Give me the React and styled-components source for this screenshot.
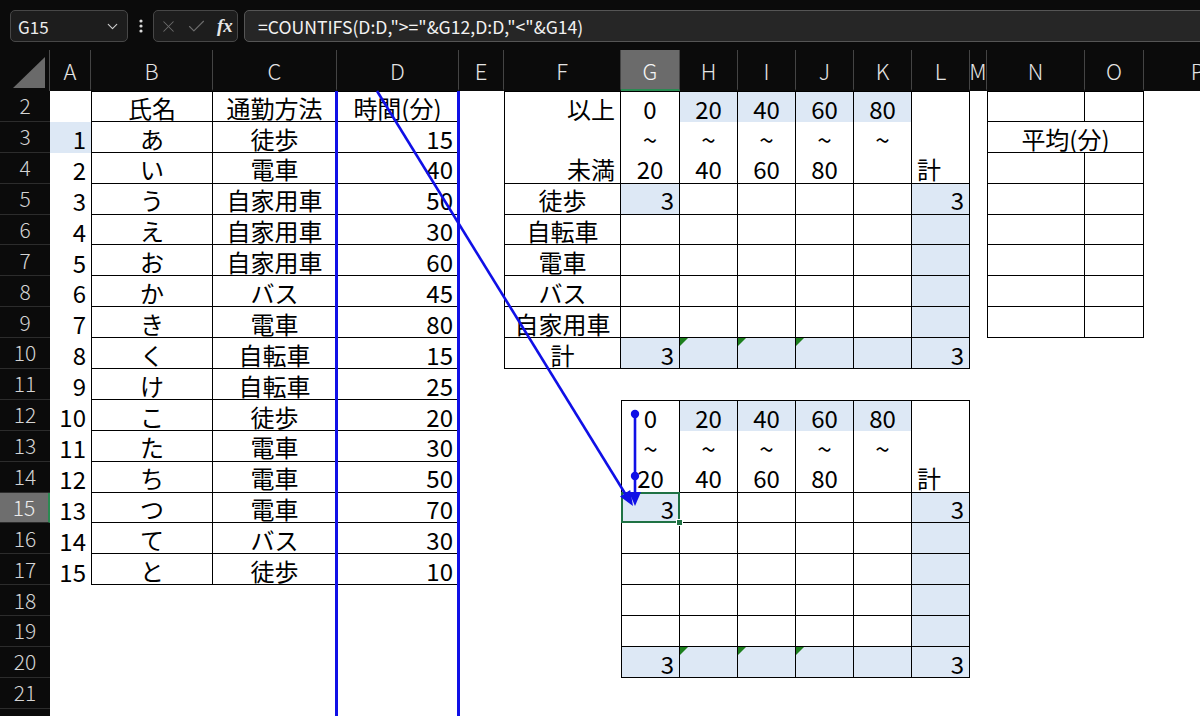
import React from 'react'
import styled, { createGlobalStyle } from 'styled-components'
import { X, Check, ChevronDown } from 'lucide-react'

const FONT = `"Noto Sans CJK JP", "Noto Sans", sans-serif`
const BLUE = '#dde8f5'
const INK = '#1010e6'
const LINE = '1px solid #000'

const COLS = [
  ['A', 41], ['B', 122], ['C', 124], ['D', 122], ['E', 45], ['F', 117],
  ['G', 59], ['H', 58], ['I', 58], ['J', 58], ['K', 58], ['L', 58],
  ['M', 17], ['N', 98], ['O', 59], ['P', 108],
]
const ROWS = Array.from({ length: 21 }, (_, i) => i + 2)

// ---- sheet contents ----
const sheet = {}
const set = (ref, v) => { sheet[ref] = { ...sheet[ref], ...v } }
const colIdx = k => COLS.findIndex(c => c[0] === k)
const range = (a, b) => COLS.slice(colIdx(a), colIdx(b) + 1).map(c => c[0])

const people = [
  ['あ', '徒歩', 15], ['い', '電車', 40], ['う', '自家用車', 50], ['え', '自家用車', 30],
  ['お', '自家用車', 60], ['か', 'バス', 45], ['き', '電車', 80], ['く', '自転車', 15],
  ['け', '自転車', 25], ['こ', '徒歩', 20], ['た', '電車', 30], ['ち', '電車', 50],
  ['つ', '電車', 70], ['て', 'バス', 30], ['と', '徒歩', 10],
]

range('B', 'D').forEach(c => {
  for (let r = 2; r <= 17; r++) set(c + r, { t: r === 2, l: c === 'B', r: true, b: true })
})
set('B2', { text: '氏名', align: 'center' })
set('C2', { text: '通勤方法', align: 'center' })
set('D2', { text: '時間(分)', align: 'center' })
people.forEach(([name, mode, min], i) => {
  const r = i + 3
  set('A' + r, { text: i + 1, align: 'flex-end' })
  set('B' + r, { text: name, align: 'center' })
  set('C' + r, { text: mode, align: 'center' })
  set('D' + r, { text: min, align: 'flex-end' })
})
set('A3', { bg: BLUE })

const bands = [['G', '0', '20'], ['H', '20', '40'], ['I', '40', '60'], ['J', '60', '80'], ['K', '80', '']]
const modes = ['徒歩', '自転車', '電車', 'バス', '自家用車', '計']

const tally = (top, withLabels) => {
  const first = withLabels ? 'F' : 'G'
  range(first, 'L').forEach(c => {
    for (let r = top; r <= top + 8; r++) {
      const head = r < top + 3
      set(c + r, { t: r === top, l: c === first, r: true, b: !head || r === top + 2 })
    }
  })
  bands.forEach(([c, from, to], i) => {
    set(c + top, { text: from, align: 'center', bg: i > 0 ? BLUE : undefined })
    set(c + (top + 1), { text: '~', align: 'center', tilde: true })
    set(c + (top + 2), { text: to, align: 'center' })
  })
  set('L' + (top + 2), { text: '計', align: 'flex-start' })
  for (let r = top + 3; r <= top + 8; r++) set('L' + r, { bg: BLUE })
  set('G' + (top + 3), { text: 3, align: 'flex-end', bg: BLUE })
  set('L' + (top + 3), { text: 3, align: 'flex-end' })
  const sum = top + 8
  set('G' + sum, { text: 3, align: 'flex-end', bg: BLUE })
  ;['H', 'I', 'J'].forEach(c => set(c + sum, { bg: BLUE, flag: true }))
  set('K' + sum, { bg: BLUE })
  set('L' + sum, { text: 3, align: 'flex-end' })
  if (withLabels) {
    set('F' + top, { text: '以上', align: 'flex-end' })
    set('F' + (top + 2), { text: '未満', align: 'flex-end' })
    modes.forEach((m, i) => set('F' + (top + 3 + i), { text: m, align: 'center' }))
  }
}
tally(2, true)
tally(12, false)

range('N', 'O').forEach(c => {
  for (let r = 2; r <= 9; r++) set(c + r, { t: r === 2, l: c === 'N', r: true, b: true })
})
set('N3', { text: '平均(分)', align: 'center', span: 2 })

// ---- styles ----
const GlobalStyle = createGlobalStyle`
  html, body { margin: 0; padding: 0; background: #fff; overflow: hidden; }
  #root { width: 1200px; height: 716px; }
`

const Screen = styled.div`
  position: relative;
  width: 1200px;
  height: 716px;
  overflow: hidden;
  display: flex;
  flex-direction: column;
  font-family: ${FONT};
  background: #fff;
`

const FormulaBar = styled.div`
  height: 50px;
  flex-shrink: 0;
  background: #0b0b0b;
  display: flex;
  align-items: flex-start;
  padding: 10px 0 0 10px;
  box-sizing: border-box;
`

const Box = styled.div`
  height: 32px;
  box-sizing: border-box;
  background: #1d1d1d;
  border: 1px solid #474747;
  border-radius: 5px;
  display: flex;
  align-items: center;
  color: #ececec;
`

const NameBox = styled(Box)`
  width: 118px;
  justify-content: space-between;
  padding: 0 6px 0 7px;
  font-size: 17px;
`

const Dots = styled.div`
  width: 25px;
  height: 32px;
  display: flex;
  align-items: center;
  justify-content: center;
`

const FxBox = styled(Box)`
  width: 85px;
  gap: 8px;
  padding-left: 5px;
`

const FxLabel = styled.span`
  font-family: "Liberation Serif", serif;
  font-style: italic;
  font-weight: bold;
  font-size: 19px;
  color: #e6e6e6;
  margin-left: 2px;
`

const FormulaInput = styled(Box)`
  flex: 1;
  margin: 0 -10px 0 6px;
  background: #262626;
  border-color: #555;
  padding-left: 13px;
  font-size: 17.6px;
  color: #f2f2f2;
  white-space: pre;
`

const SheetArea = styled.div`
  flex: 1;
  overflow: hidden;
`

const Grid = styled.div`
  display: grid;
  grid-template-columns: 50px ${COLS.map(c => c[1] + 'px').join(' ')};
  grid-template-rows: 41px repeat(21, 30.9px);
  width: max-content;
`

const Corner = styled.div`
  background: #0b0b0b;
  border-right: 1px solid #4a4a4a;
  display: flex;
  align-items: flex-end;
  justify-content: flex-end;
  padding: 0 4px 3px 0;
  box-sizing: border-box;
  &::after {
    content: '';
    width: 0;
    height: 0;
    border-left: 32px solid transparent;
    border-bottom: 31px solid #6a6a6a;
  }
`

const ColHead = styled.div`
  background: ${p => (p.$active ? '#6b6b6b' : '#0b0b0b')};
  color: ${p => (p.$active ? '#f4f4f4' : '#e4e4e4')};
  border-right: 1px solid #444;
  border-bottom: ${p => (p.$active ? '2px solid #2a8a52' : '2px solid #0b0b0b')};
  box-sizing: border-box;
  display: flex;
  align-items: center;
  justify-content: center;
  font-size: 22px;
  font-weight: 300;
  line-height: 1.2;
  overflow: hidden;
  padding-top: 2px;
`

const RowHead = styled.div`
  background: ${p => (p.$active ? '#6e6e6e' : '#0b0b0b')};
  color: ${p => (p.$active ? '#ececec' : '#d4d4d4')};
  border-bottom: 1px solid #2c2c2c;
  border-right: ${p => (p.$active ? '2px solid #2a8a52' : 'none')};
  box-sizing: border-box;
  display: flex;
  align-items: center;
  justify-content: center;
  font-size: 21px;
  font-weight: 300;
  line-height: 1.2;
`

const Cell = styled.div`
  position: relative;
  grid-column: span ${p => p.$span || 1};
  box-sizing: border-box;
  display: flex;
  align-items: center;
  justify-content: ${p => p.$align || 'flex-start'};
  padding: ${p => (p.$tilde ? '5px 5px 0' : '3px 5px 0')};
  background: ${p => p.$bg || '#fff'};
  border-top: ${p => (p.$t ? LINE : 'none')};
  border-right: ${p => (p.$r ? LINE : 'none')};
  border-bottom: ${p => (p.$b ? LINE : 'none')};
  border-left: ${p => (p.$l ? LINE : 'none')};
  font-size: ${p => (p.$tilde ? '26px' : '24px')};
  line-height: ${p => (p.$tilde ? 0.8 : 1.15)};
  font-weight: 400;
  color: #000;
  white-space: nowrap;
  ${p => p.$flag && `
    &::before {
      content: '';
      position: absolute;
      top: 0;
      left: 0;
      border-top: 8px solid #1d7f1d;
      border-right: 8px solid transparent;
    }
  `}
`

const Selection = styled.span`
  position: absolute;
  inset: -1px -1px -1px -1px;
  border: 2px solid #1f7244;
  z-index: 2;
  &::after {
    content: '';
    position: absolute;
    right: -5px;
    bottom: -5px;
    width: 5px;
    height: 5px;
    background: #1f7244;
    border: 1px solid #fff;
  }
`

const Overlay = styled.svg`
  position: absolute;
  left: 0;
  top: 0;
  pointer-events: none;
  z-index: 5;
`

const Sheet = () => (
  <Grid>
    <Corner />
    {COLS.map(([k]) => (
      <ColHead key={k} $active={k === 'G'}>{k}</ColHead>
    ))}
    {ROWS.map(r => (
      <React.Fragment key={r}>
        <RowHead $active={r === 15}>{r}</RowHead>
        {COLS.map(([k]) => {
          const ref = k + r
          if (ref === 'O3') return null
          const c = sheet[ref] || {}
          return (
            <Cell
              key={ref}
              $t={c.t} $r={c.r} $b={c.b} $l={c.l}
              $bg={c.bg} $align={c.align} $span={c.span}
              $flag={c.flag} $tilde={c.tilde}
            >
              {c.text}
              {ref === 'G15' && <Selection />}
            </Cell>
          )
        })}
      </React.Fragment>
    ))}
  </Grid>
)

const Arrows = () => (
  <Overlay width="1200" height="716" viewBox="0 0 1200 716">
    <line x1="336.5" y1="91" x2="336.5" y2="716" stroke={INK} strokeWidth="3" />
    <line x1="458.5" y1="91" x2="458.5" y2="716" stroke={INK} strokeWidth="3" />
    <line x1="377" y1="91" x2="626" y2="495" stroke={INK} strokeWidth="2.6" />
    <polygon points="633,506 620,496.4 630.2,490" fill={INK} />
    <line x1="635" y1="414" x2="635" y2="494" stroke={INK} strokeWidth="2.6" />
    <polygon points="635,506 629,492 641,492" fill={INK} />
    <circle cx="635" cy="414" r="4.2" fill={INK} />
    <circle cx="635" cy="476" r="4.2" fill={INK} />
  </Overlay>
)

const App = () => (
  <>
    <GlobalStyle />
    <Screen>
      <FormulaBar>
        <NameBox>
          <span>G15</span>
          <ChevronDown size={17} strokeWidth={1.6} color="#cfcfcf" />
        </NameBox>
        <Dots>
          <svg width="4" height="14" viewBox="0 0 4 14">
            <circle cx="2" cy="2" r="1.6" fill="#d8d8d8" />
            <circle cx="2" cy="7" r="1.6" fill="#d8d8d8" />
            <circle cx="2" cy="12" r="1.6" fill="#d8d8d8" />
          </svg>
        </Dots>
        <FxBox>
          <X size={19} strokeWidth={1.3} color="#6c6c6c" />
          <Check size={21} strokeWidth={1.3} color="#6c6c6c" />
          <FxLabel>fx</FxLabel>
        </FxBox>
        <FormulaInput>{'=COUNTIFS(D:D,">="&G12,D:D,"<"&G14)'}</FormulaInput>
      </FormulaBar>
      <SheetArea>
        <Sheet />
      </SheetArea>
      <Arrows />
    </Screen>
  </>
)

export default App
